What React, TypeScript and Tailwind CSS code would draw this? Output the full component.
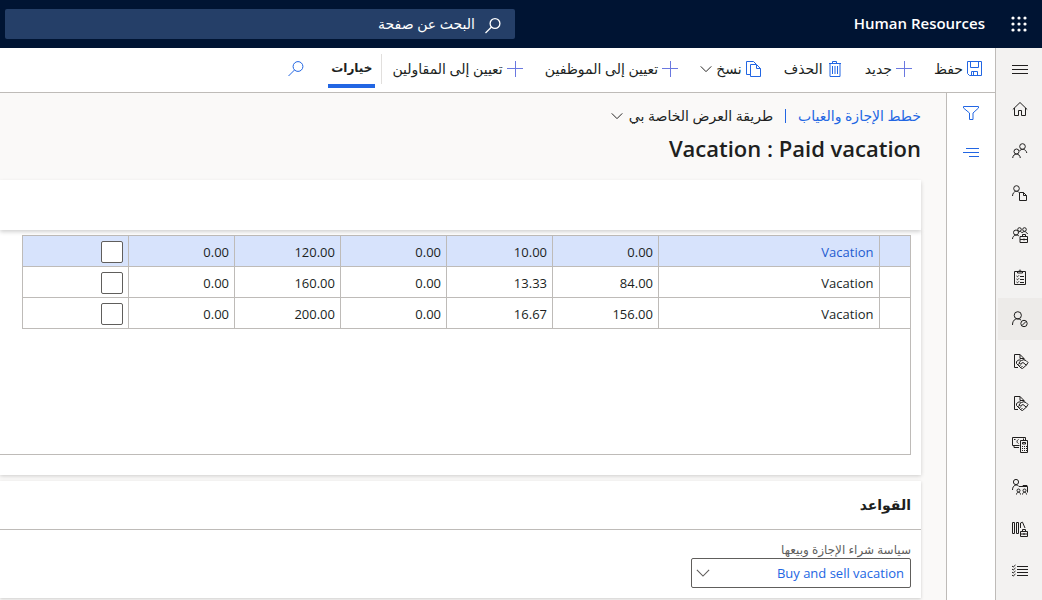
import type { ReactNode } from 'react';

function Icon({ size = 16, stroke = 1, className = '', children }: { size?: number; stroke?: number; className?: string; children: ReactNode }) {
  return (
    <svg
      width={size}
      height={size}
      viewBox="0 0 16 16"
      fill="none"
      stroke="currentColor"
      strokeWidth={stroke}
      aria-hidden="true"
      className={`shrink-0 overflow-visible ${className}`}
    >
      {children}
    </svg>
  );
}

const Plus = () => (
  <Icon className="text-[#6a78e0]">
    <path d="M8.500 0v16M0 7.500h16" />
  </Icon>
);
const Save = () => (
  <Icon className="text-[#2266e3]">
    <path d="M.5 .5h14v14h-12l-2-2zM3.500 .5v6h8v-6M4.500 14.500v-4h6v4M6.500 11v3" />
  </Icon>
);
const Trash = () => (
  <Icon className="text-[#2266e3]">
    <path d="M2 2.500h12M5.500 2.500v-2h4v2M3 2.500v13h10v-13M5.500 5v8M8 5v8M10.500 5v8" />
  </Icon>
);
const Copy = () => (
  <Icon className="text-[#2266e3]">
    <path d="M4.500 13.500h-4V.5h7l2.500 2.500M4.500 3.500h6l4 4v8h-10zM10.500 3.500v4h4" />
  </Icon>
);
const Search = ({ className = '', stroke = 1 }: { className?: string; stroke?: number }) => (
  <Icon className={className} stroke={stroke}>
    <circle cx="10" cy="5.500" r="4.900" />
    <path d="M6.500 9 .5 15" />
  </Icon>
);
const Chevron = ({ size = 12, className = '' }: { size?: number; className?: string }) => (
  <Icon size={size} className={className} stroke={1.3}>
    <path d="M1 4.500l7 7 7-7" />
  </Icon>
);

const formIcon = (
  <path d="M6 14.500H2.500V1.500h5.500l4 4v1.500M8 1.500v4h4M4.500 8.500 7 6.800l2.500.7 2-.7 2.500.7 2 2-1.500 2.500-4 3.500-1.500-.5-4.500-4.500zM8.500 8 7 10l1.500.8 2.500-1.300 3.500 2.800M6 11.500l1.500-1M7.500 13l1.500-1.500M9 14.500l1.500-1.500" />
);

const navItems: { label: string; icon: ReactNode }[] = [
  { label: 'الصفحة الرئيسية', icon: <path d="M.8 8.500 8 1.500l7.200 7M2.500 7v7.500h4v-5h3v5h4V7" /> },
  {
    label: 'الموظفون',
    icon: (
      <>
        <circle cx="10.500" cy="3.500" r="2.800" />
        <circle cx="4.500" cy="8.500" r="2.500" />
        <path d="M.7 15c.3-5.200 7.300-5.200 7.600 0M7.500 8c1.500-2.500 6.500-2.500 7.300 2" />
      </>
    ),
  },
  {
    label: 'ملف الموظف',
    icon: (
      <>
        <circle cx="4.500" cy="3.500" r="2.800" />
        <path d="M.5 11c.3-5.500 5.500-5.500 6.500-3.500M7.500 7.500h4l3 3v5h-7zM11.500 7.500v3h3" />
      </>
    ),
  },
  {
    label: 'الفرق',
    icon: (
      <>
        <circle cx="4" cy="5.500" r="2.500" />
        <circle cx="7.500" cy="2.500" r="1.800" />
        <circle cx="12.500" cy="2.500" r="1.800" />
        <path d="M.5 12c.2-4.500 5-4.500 6.500-3M6 6c1-2 3.500-2 4 0 .8-2 4.500-2 5.500 1M8 9.500h7.500v6H8zM10.500 9.500v-2h3v2M8 12.500h7.500M12 11.500v2" />
      </>
    ),
  },
  {
    label: 'المهام',
    icon: <path d="M2.500 2.500h11v13h-11zM5.500 4V2.500h1.500c0-2 2-2 2 0h1.500V4zM4.500 7l1 .8L7 6.300M8 7.500h4M4.500 10l1 .8L7 9.300M8 10.500h4M4.500 13l1 .8L7 12.300M8 13.500h4" />,
  },
  {
    label: 'الإجازات والغياب',
    icon: (
      <>
        <circle cx="5.800" cy="4.300" r="3.600" />
        <path d="M.5 14c0-6 4.500-7.500 8.500-5" />
        <circle cx="12" cy="12.500" r="3.200" />
        <path d="m9.900 14.600 4.200-4.200" />
      </>
    ),
  },
  { label: 'المزايا', icon: formIcon },
  { label: 'إدارة المزايا', icon: formIcon },
  {
    label: 'الرواتب',
    icon: <path d="M7.500 8.500h-7v-8h13v3M2 8.500v2h5M3.500 2.500H2M6.500 2.500c-2 1-2 3 0 4M11.500 1.500v2M8.500 3.500h7v12h-7zM10.500 5.500h3v1.500h-3zM10 9.500h1M12 9.500h1M14 9.500h1M10 11.500h1M12 11.500h1M14 11.500h1M10 13.500h1M12 13.500h1M14 13.500h1" />,
  },
  {
    label: 'التوظيف',
    icon: (
      <>
        <circle cx="4" cy="3" r="2.600" />
        <path d="M.5 11c0-5.500 5-6 6.500-3.500V7.500h8.500v6M11 7.500v-1h4v1M4.500 15.500c0-3 4-3 4 0M10.500 15.500c0-3 4-3 4 0" />
        <circle cx="6.500" cy="11.500" r="1.500" />
        <circle cx="12.500" cy="11.500" r="1.500" />
      </>
    ),
  },
  {
    label: 'التدريب',
    icon: <path d="M.5 1.500h2v11h-2zM4.500 1.500h2v11h-2zM8.500 2l2-.8L13 7M8.500 2v5M8.500 10.500h7v5h-7zM10.500 10.500v-2h3v2M8.500 13h7M12 12v2" />,
  },
  {
    label: 'قوائم التحقق',
    icon: <path d="M5 3.500h11M5 6.500h11M5 9.500h11M5 12.500h11M0 3l1.200 1L3.500 2M0 6l1.200 1 2.300-2M0 9l1.200 1 2.300-2M0 12l1.200 1 2.300-2" />,
  },
];

const rows = [
  ['Vacation', '0.00', '10.00', '0.00', '120.00', '0.00'],
  ['Vacation', '84.00', '13.33', '0.00', '160.00', '0.00'],
  ['Vacation', '156.00', '16.67', '0.00', '200.00', '0.00'],
];

function Command({ icon, label, menu }: { icon: ReactNode; label: string; menu?: boolean }) {
  return (
    <button type="button" className="flex items-center gap-1 whitespace-nowrap">
      {icon}
      <span>{label}</span>
      {menu && <Chevron />}
    </button>
  );
}

export default function App() {
  return (
    <div
      dir="rtl"
      className="flex min-h-screen flex-col overflow-hidden bg-[#faf9f8] font-['Open_Sans','Noto_Sans','DejaVu_Sans',sans-serif] text-[13px] leading-5 text-[#201f1e]"
    >
      <header className="flex h-12 items-center bg-[#001433] ps-[15px] pe-[5px] text-white">
        <button type="button" aria-label="التطبيقات">
          <svg width="16" height="16" viewBox="0 0 16 16" fill="currentColor" aria-hidden="true">
            {[2, 8, 14].map((y) => [2, 8, 14].map((x) => <circle key={`${x}-${y}`} cx={x} cy={y} r="1.600" />))}
          </svg>
        </button>
        <span className="ms-[26px] pb-0.5 text-[15px] font-semibold">Human Resources</span>
        <label className="ms-auto flex h-[30px] w-[510px] items-center gap-2.5 rounded-xs bg-[#253f68] ps-3.5">
          <Search className="mt-1" stroke={1.3} />
          <input
            type="text"
            aria-label="البحث عن صفحة"
            placeholder="البحث عن صفحة"
            className="min-w-0 flex-1 bg-transparent text-[14px] outline-none placeholder:text-white"
          />
        </label>
      </header>

      <div className="flex flex-1">
        <nav className="flex w-[47px] shrink-0 flex-col border-e border-[#bebbb8] bg-[#f3f2f1]">
          <button type="button" aria-label="القائمة" className="flex h-10 items-center justify-center pe-0.5">
            <Icon><path d="M0 5.500h16M0 9.500h16M0 13.500h16" /></Icon>
          </button>
          {navItems.map((item, i) => (
            <a
              key={item.label}
              href="#"
              aria-label={item.label}
              className={`me-0.5 flex h-[42px] items-center justify-center ${i === 5 ? 'bg-[#edebe9]' : ''}`}
            >
              <Icon>{item.icon}</Icon>
            </a>
          ))}
        </nav>

        <div className="flex min-w-0 flex-1 flex-col">
          <div className="flex h-[45px] shrink-0 items-center border-b border-[#bebbb8] bg-white ps-3 pb-0.5" role="toolbar">
            <div className="flex items-center gap-[22px] text-[14px]">
              <Command icon={<Save />} label="حفظ" />
              <Command icon={<Plus />} label="جديد" />
              <Command icon={<Trash />} label="الحذف" />
              <Command icon={<Copy />} label="نسخ" menu />
              <Command icon={<Plus />} label="تعيين إلى الموظفين" />
              <Command icon={<Plus />} label="تعيين إلى المقاولين" />
            </div>
            <span className="ms-2.5 h-[30px] w-px bg-[#e1dfdd]" />
            <button type="button" className="ms-1.5 mt-0.5 h-9 border-b-4 border-[#2266e3] px-[3px] text-[12px] font-semibold">خيارات</button>
            <button type="button" aria-label="بحث" className="ms-6 text-[#2266e3]"><Search /></button>
          </div>

          <div className="flex flex-1">
            <aside className="flex w-[49px] shrink-0 flex-col items-center gap-6 border-e border-[#bebbb8] bg-white pt-3 text-[#2266e3]">
              <button type="button" aria-label="تصفية">
                <Icon><path d="M.5 1.500h15v1.500l-5.500 5v6.500H6.500V8L.5 3z" /></Icon>
              </button>
              <button type="button" aria-label="قائمة">
                <Icon><path d="M3 3.500h13M0 7.500h16M6 11.500h10" /></Icon>
              </button>
            </aside>

            <main className="min-w-0 flex-1 ps-[25px]">
              <div className="flex items-center pt-[13px] text-[14px]">
                <a href="#" className="text-[#2266e3]">خطط الإجازة والغياب</a>
                <span className="mx-3 h-3.5 w-px bg-[#2266e3]" />
                <button type="button" className="flex items-center gap-1.5">
                  طريقة العرض الخاصة بي
                  <Chevron />
                </button>
              </div>
              <h1 className="mt-1.5 text-[22px] leading-8 font-semibold"><bdi>Vacation : Paid vacation</bdi></h1>

              <section className="relative mt-4 h-[50px] bg-white shadow-[0_2px_4px_rgba(0,0,0,0.18)]" />

              <section className="bg-white ps-2.5 pt-[5px] pb-5 shadow-[0_1px_4px_rgba(0,0,0,0.18)]">
                <div className="h-[220px] border-s border-b border-[#bebbb8]">
                  <table className="w-[888px] table-fixed border-collapse">
                    <colgroup>
                      <col className="w-[31px]" />
                      <col />
                      <col className="w-[106px]" />
                      <col className="w-[106px]" />
                      <col className="w-[106px]" />
                      <col className="w-[106px]" />
                      <col className="w-[106px]" />
                      <col className="w-[106px]" />
                    </colgroup>
                    <tbody>
                      {rows.map((row, i) => (
                        <tr key={i} className={`h-[31px] ${i === 0 ? 'bg-[#d7e3fc]' : 'bg-white'}`}>
                          <td className="border-y border-e border-[#bebbb8]" />
                          {row.map((cell, j) => (
                            <td key={j} className="border border-[#bebbb8] p-0 ps-[5px] pt-0.5">
                              {i === 0 && j === 0 ? <a href="#" className="text-[#1f5bd0]">{cell}</a> : cell}
                            </td>
                          ))}
                          <td className="border border-[#bebbb8] p-0 ps-[5px] pt-px">
                            <input
                              type="checkbox"
                              aria-label={`تحديد الصف ${i + 1}`}
                              className="block size-[22px] appearance-none rounded-xs border border-[#605e5c] bg-white"
                            />
                          </td>
                        </tr>
                      ))}
                    </tbody>
                  </table>
                </div>
              </section>

              <section className="mt-1.5 bg-white shadow-[0_1px_3px_rgba(0,0,0,0.18)]">
                <h2 className="border-b border-[#bebbb8] px-2.5 py-3 text-[14px] leading-6 font-semibold">القواعد</h2>
                <div className="flex flex-col items-start px-2.5 pt-3 pb-2.5">
                  <label htmlFor="policy" className="text-[12px] leading-4 text-[#605e5c]">سياسة شراء الإجازة وبيعها</label>
                  <div className="flex h-[30px] w-[220px] items-center rounded-xs border border-[#605e5c] ps-1.5 pe-1">
                    <select id="policy" className="min-w-0 flex-1 appearance-none bg-transparent text-[#2266e3] outline-none">
                      <option>Buy and sell vacation</option>
                    </select>
                    <Chevron size={14} className="text-[#605e5c]" />
                  </div>
                </div>
              </section>
            </main>
          </div>
        </div>
      </div>
    </div>
  );
}
